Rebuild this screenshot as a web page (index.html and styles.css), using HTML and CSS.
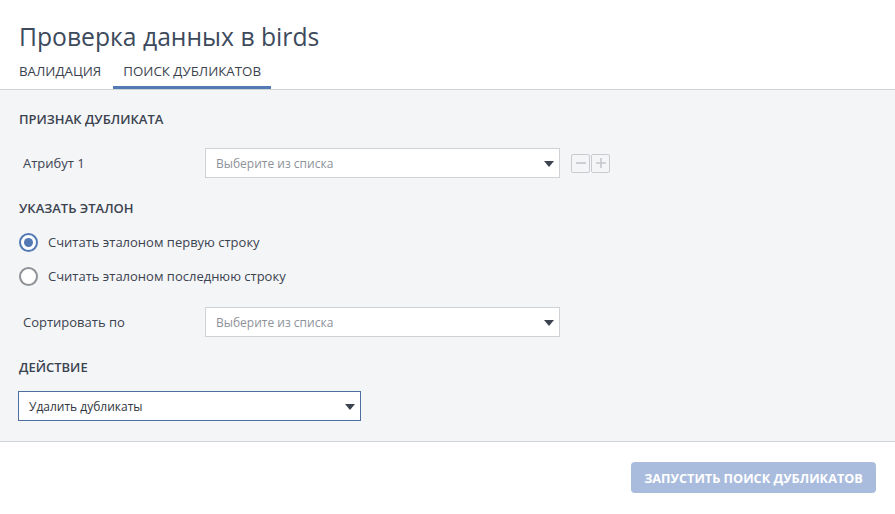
FILE: index.html
```html
<!DOCTYPE html>
<html lang="ru">
<head>
<meta charset="utf-8">
<title>Проверка данных</title>
<link rel="stylesheet" href="styles.css">
</head>
<body>
<div class="modal">
  <header class="head">
    <h1 class="title">Проверка данных в birds</h1>
    <nav class="tabs">
      <span class="tab">ВАЛИДАЦИЯ</span>
      <span class="tab active">ПОИСК ДУБЛИКАТОВ</span>
    </nav>
  </header>
  <main class="body">
    <h2 class="section">ПРИЗНАК ДУБЛИКАТА</h2>
    <div class="row">
      <span class="label">Атрибут 1</span>
      <div class="select"><span class="ph">Выберите из списка</span><span class="caret"></span></div>
      <div class="pm">
        <span class="pmbtn"><svg width="12" height="12" viewBox="0 0 12 12"><path d="M1 6h10" stroke="#c3c6cc" stroke-width="1.6"/></svg></span>
        <span class="pmbtn"><svg width="12" height="12" viewBox="0 0 12 12"><path d="M1 6h10M6 1v10" stroke="#c3c6cc" stroke-width="1.6"/></svg></span>
      </div>
    </div>
    <h2 class="section s2">УКАЗАТЬ ЭТАЛОН</h2>
    <div class="radios">
      <label class="radio"><span class="dot on"></span>Считать эталоном первую строку</label>
      <label class="radio"><span class="dot"></span>Считать эталоном последнюю строку</label>
    </div>
    <div class="row r2">
      <span class="label">Сортировать по</span>
      <div class="select"><span class="ph">Выберите из списка</span><span class="caret"></span></div>
    </div>
    <h2 class="section s3">ДЕЙСТВИЕ</h2>
    <div class="select action"><span class="val">Удалить дубликаты</span><span class="caret"></span></div>
  </main>
  <footer class="foot">
    <button class="run">ЗАПУСТИТЬ ПОИСК ДУБЛИКАТОВ</button>
  </footer>
</div>
</body>
</html>
```
FILE: styles.css
```css
* { box-sizing: border-box; }
html, body { margin: 0; padding: 0; background: #fff; }
body { font-family: "Open Sans", "Noto Sans", sans-serif; color: #3b4350; }
.modal { width: 895px; height: 514px; display: flex; flex-direction: column; background: #fff; }
.head { padding: 20px 0 0 0; border-bottom: 1px solid #cfd2d6; height: 90px; }
.title { margin: 0 0 0 19px; font-size: 24.7px; font-weight: 500; color: #3d4a5c; line-height: 34px; height: 34px; }
.tabs { display: flex; margin: 0; padding-left: 9px; }
.tab { font-size: 13.3px; color: #3b4350; padding: 5px 10px 0; height: 35px; line-height: 24px; margin-right: 2px; border-bottom: 3px solid transparent; }
.tab.active { border-bottom-color: #5379b4; }
.body { flex: none; height: 352px; background: #f4f5f7; border-bottom: 1px solid #cfd2d6; padding: 20px 18px 0 18px; }
.section { margin: 0; padding-left: 1px; font-size: 13px; font-weight: 600; color: #3b4350; line-height: 18px; }
.row { display: flex; align-items: center; margin-top: 20px; height: 30px; }
.label { width: 187px; padding-left: 5px; font-size: 13px; color: #3b4350; }
.select { width: 355px; height: 30px; background: #fff; border: 1px solid #cfd2d6; display: flex; align-items: center; justify-content: space-between; padding: 0 5px 0 10px; }
.ph { font-size: 12px; color: #8d9299; }
.val { font-size: 12px; color: #2f3640; }
.caret { width: 0; height: 0; border-left: 5px solid transparent; border-right: 5px solid transparent; border-top: 6px solid #3b4350; margin-top: 1px; }
.pm { display: flex; margin-left: 11px; gap: 1px; }
.pmbtn { width: 19px; height: 19px; border: 1px solid #c8cbd0; border-radius: 2px; display: flex; align-items: center; justify-content: center; }
.s2 { margin-top: 21px; }
.radios { margin-top: 8px; }
.radio { display: flex; align-items: center; height: 34px; font-size: 13px; color: #3b4350; padding-left: 1px; }
.dot { width: 19px; height: 19px; border-radius: 50%; border: 2px solid #8e9196; background: #fff; margin-right: 10px; position: relative; flex: none; }
.dot.on { border-color: #5379b4; }
.dot.on::after { content: ""; position: absolute; left: 3px; top: 3px; width: 9px; height: 9px; border-radius: 50%; background: #5379b4; }
.r2 { margin-top: 14px; }
.s3 { margin-top: 21px; }
.action { width: 343px; margin-top: 15px; border-color: #4d6f9f; }
.foot { flex: 1; display: flex; justify-content: flex-end; align-items: flex-start; padding: 20px 19px 0 0; }
.run { width: 245px; height: 31px; border: none; border-radius: 4px; background: #a9bcdd; color: #fff; font-family: "Open Sans", sans-serif; font-weight: 700; font-size: 12.7px; letter-spacing: 0; }
```
